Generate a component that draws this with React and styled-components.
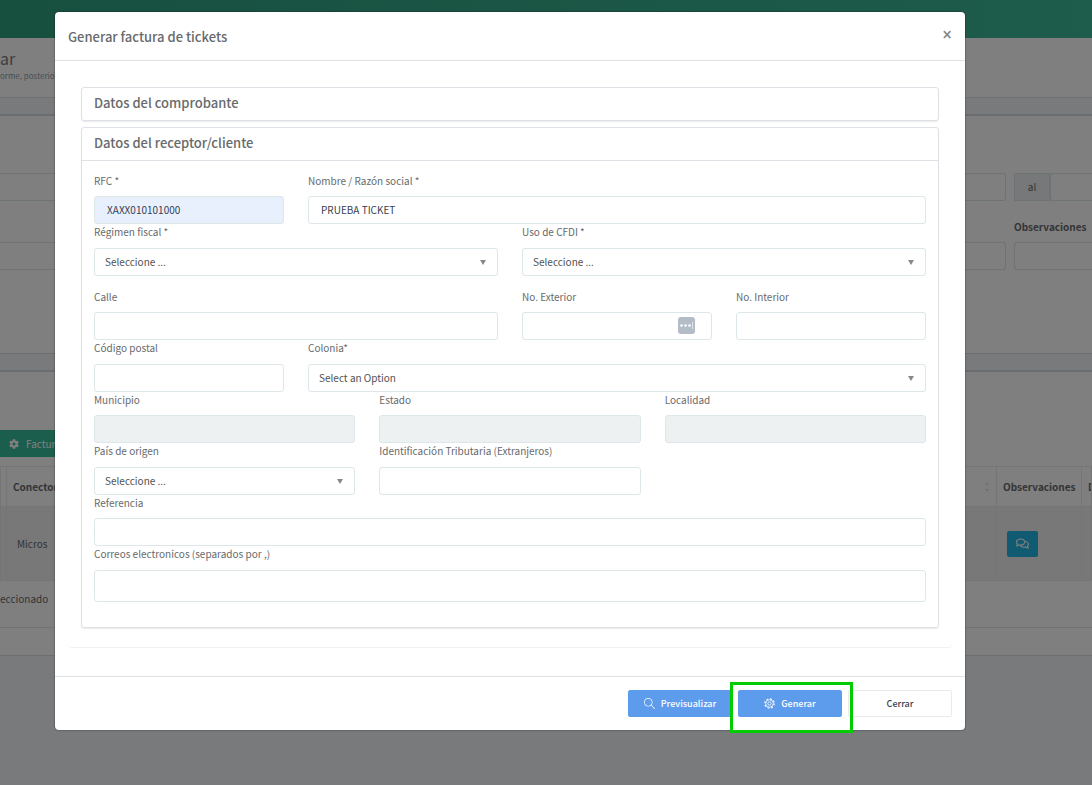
import React from "react";
import styled, { createGlobalStyle } from "styled-components";
import { SlMagnifier } from "react-icons/sl";
import { FaCog, FaRegComments } from "react-icons/fa";

const GlobalStyle = createGlobalStyle`
  * {
    box-sizing: border-box;
  }

  body {
    margin: 0;
    color: #676a6c;
    background: #f3f5f8;
    font-family: "Noto Sans CJK SC", "Noto Sans", sans-serif;
    font-size: 10px;
    line-height: 16px;
  }

  button, input, select {
    font-family: inherit;
    font-size: inherit;
    color: inherit;
  }
`;

const Page = styled.div`
  position: relative;
  min-height: 100vh;
  overflow: hidden;
`;

const TopBar = styled.header`
  height: 38px;
  background: linear-gradient(90deg, #30a080, #3cb896);
`;

const PageHead = styled.div`
  height: 60px;
  padding-top: 8px;
  background: #fff;
  border-bottom: 1px solid #dfe4e8;

  h1 {
    margin: 0;
    color: #7b7e80;
    font-size: 16px;
    font-weight: 400;
    line-height: 24px;
  }

  p {
    margin: 0;
    color: #909fa7;
    font-size: 8px;
    line-height: 12px;
  }
`;

const Panel = styled.section`
  margin-top: 16px;
  background: #fff;
  border-top: 2px solid #d5dde4;
  border-bottom: 1px solid #d9dee3;
`;

const Filters = styled.div`
  padding: 57px 0 70px;
`;

const FilterRow = styled.div`
  display: grid;
  grid-template-columns: 1fr 78px;
  align-items: end;
  gap: 8px;
  margin-bottom: 13px;

  label {
    display: block;
    padding: 5px 0 7px;
    font-weight: 700;
  }
`;

const FilterInput = styled.input`
  display: block;
  width: 100%;
  min-width: 0;
  height: 28px;
  background: #fff;
  border: 1px solid #dde6e9;
  border-radius: ${(props) => (props.$open ? "3px 0 0 3px" : "0 3px 3px 0")};
  border-width: ${(props) => (props.$open ? "1px 0 1px 1px" : "1px 1px 1px 0")};
`;

const RangeEnd = styled.div`
  display: flex;

  span {
    flex: 0 0 36px;
    text-align: center;
    line-height: 26px;
    background: #edf1f5;
    border: 1px solid #dde6e9;
  }
`;

const Toolbar = styled.div`
  padding: 58px 0 9px;
`;

const GreenButton = styled.button`
  display: flex;
  align-items: center;
  gap: 7px;
  width: 90px;
  height: 27px;
  padding: 0 9px;
  border: 0;
  color: #fff;
  background: #37bc9b;
`;

const Table = styled.table`
  width: 100%;
  table-layout: fixed;
  border-collapse: collapse;

  th,
  td {
    padding: 0 7px;
    text-align: left;
    white-space: nowrap;
    overflow: hidden;
    border: 1px solid #eaeaea;
  }

  th {
    height: 40px;
    padding: 0 6px;
    font-weight: 700;
  }

  td {
    height: 74px;
    padding: 0 10px;
    background: #f0f0f0;
  }

  th:first-child,
  td:first-child {
    padding: 0;
  }
`;

const HeadCell = styled.div`
  display: flex;
  justify-content: space-between;
  align-items: center;
`;

const TableInfo = styled.p`
  height: 47px;
  margin: 0;
  padding-top: 10px;
  border-bottom: 1px solid #e6e6e6;
`;

const PanelFoot = styled.div`
  height: 27px;
`;

const CommentButton = styled.button`
  display: flex;
  align-items: center;
  justify-content: center;
  width: 31px;
  height: 26px;
  padding: 0;
  border: 0;
  border-radius: 2px;
  color: #fff;
  background: #23b7e5;
`;

const Backdrop = styled.div`
  position: absolute;
  inset: 0;
  padding: 12px 127px 55px 55px;
  background: rgba(0, 0, 0, 0.5);
`;

const Modal = styled.div`
  background: #fff;
  border-radius: 4px;
  box-shadow: 0 0 2px rgba(0, 0, 0, 0.6);
`;

const ModalHeader = styled.div`
  display: flex;
  justify-content: space-between;
  align-items: center;
  height: 49px;
  padding: 0 13px;
  border-bottom: 1px solid #dee2e6;

  h2 {
    margin: 0;
    padding-top: 2px;
    font-size: 13px;
    font-weight: 500;
  }
`;

const CloseButton = styled.button`
  padding: 0 0 4px;
  border: 0;
  background: none;
  font-family: "Noto Sans", sans-serif;
  font-size: 17px;
  font-weight: 600;
  line-height: 17px;
  color: #888;
`;

const ModalBody = styled.div`
  padding: 13px 13px 28px;
`;

const TabPane = styled.div`
  padding: 13px 13px 19px;
  border-bottom: 1px solid #f1f1f1;
  border-radius: 4px;
`;

const Card = styled.section`
  border: 1px solid #dee2e6;
  border-radius: 3px;
  box-shadow: 0 1px 1px rgba(0, 0, 0, 0.08);

  & + & {
    margin-top: 6px;
  }

  h3 {
    margin: 0;
    padding: 0 12px 2px;
    font-size: 13px;
    font-weight: 500;
    line-height: 30px;
  }
`;

const CardBody = styled.div`
  padding: 12px 12px 25px;
  border-top: 1px solid #dee2e6;
`;

const Row = styled.div`
  display: grid;
  grid-template-columns: repeat(12, 1fr);
  column-gap: 24px;
  padding-top: ${(props) => (props.$spaced ? "13px" : "0")};

  label {
    margin-bottom: ${(props) => (props.$tight ? "7px" : "8px")};
  }
`;

const Field = styled.div`
  display: flex;
  flex-direction: column;
  grid-column: span ${(props) => props.$span};
  min-width: 0;
`;

const Control = styled.div`
  position: relative;
`;

const Input = styled.input`
  display: block;
  width: 100%;
  height: ${(props) => (props.$tall ? "32px" : "28px")};
  padding: 0 12px 2px;
  color: #3a3f51;
  background: ${(props) => (props.$filled ? "#e8f0fe" : "#fff")};
  border: 1px solid #dde6e9;
  border-radius: 3px;

  &:disabled {
    background: #edf1f2;
  }
`;

const SelectBox = styled(Control)`
  &::after {
    content: "";
    position: absolute;
    top: 12px;
    right: 12px;
    border: 3px solid transparent;
    border-top: 5px solid #888;
    border-bottom: 0;
    pointer-events: none;
  }

  select {
    display: block;
    width: 100%;
    height: 28px;
    padding: 0 24px 2px 10px;
    appearance: none;
    color: #515253;
    background: #fff;
    border: 1px solid #dde6e9;
    border-radius: 3px;
  }
`;

const AutofillBadge = styled.svg`
  position: absolute;
  top: 5px;
  right: 17px;
`;

const ModalFooter = styled.div`
  display: flex;
  justify-content: flex-end;
  gap: 6px;
  padding: 13px;
  border-top: 1px solid #dee2e6;
`;

const Button = styled.button`
  display: flex;
  align-items: center;
  justify-content: center;
  gap: 6px;
  width: 104px;
  height: 27px;
  padding: 0;
  font-size: 9px;
  font-weight: 500;
  color: ${(props) => (props.$primary ? "#fff" : "#3a3f51")};
  background: ${(props) => (props.$primary ? "#5d9cec" : "#fff")};
  border: 1px solid ${(props) => (props.$primary ? "#5d9cec" : "#eaeaea")};
  border-radius: 2px;
`;

const Highlight = styled.div`
  position: relative;

  &::after {
    content: "";
    position: absolute;
    inset: -8px -11px -16px -8px;
    border: 3px solid #00cc00;
    pointer-events: none;
  }
`;

function TextField({ id, label, span, ...rest }) {
  return (
    <Field $span={span}>
      <label htmlFor={id}>{label}</label>
      <Input id={id} type="text" {...rest} />
    </Field>
  );
}

function SelectField({ id, label, span, placeholder }) {
  return (
    <Field $span={span}>
      <label htmlFor={id}>{label}</label>
      <SelectBox>
        <select id={id}>
          <option>{placeholder}</option>
        </select>
      </SelectBox>
    </Field>
  );
}

function SortIcon() {
  return (
    <svg width="6" height="12" viewBox="0 0 6 12" fill="#e4e4e4">
      <path d="M3 1 5 4H1zM3 11 1 8h4z" />
    </svg>
  );
}

function GearIcon() {
  return (
    <svg width="11" height="11" viewBox="0 0 22 22" fill="none" stroke="#fff">
      <circle cx="11" cy="11" r="7.6" strokeWidth="1.6" />
      <circle cx="11" cy="11" r="9.4" strokeWidth="2.4" strokeDasharray="3.69 3.69" />
      <circle cx="11" cy="11" r="3.4" strokeWidth="1.6" />
    </svg>
  );
}

function Background() {
  return (
    <>
      <TopBar />
      <PageHead>
        <h1>ar</h1>
        <p>orme, posterio</p>
      </PageHead>
      <Panel>
        <Filters>
          <FilterRow>
            <FilterInput aria-label="Del" />
            <RangeEnd>
              <span>al</span>
              <FilterInput $open aria-label="al" />
            </RangeEnd>
          </FilterRow>
          <FilterRow>
            <FilterInput aria-label="Conector" />
            <div>
              <label htmlFor="observaciones">Observaciones</label>
              <FilterInput $open id="observaciones" />
            </div>
          </FilterRow>
        </Filters>
      </Panel>
      <Panel>
        <Toolbar>
          <GreenButton>
            <FaCog size={10} /> Factura
          </GreenButton>
        </Toolbar>
        <Table>
          <colgroup>
            <col width="6" />
            <col />
            <col width="85" />
            <col width="10" />
          </colgroup>
          <thead>
            <tr>
              <th />
              <th>
                <HeadCell>
                  Conector <SortIcon />
                </HeadCell>
              </th>
              <th>Observaciones</th>
              <th>D</th>
            </tr>
          </thead>
          <tbody>
            <tr>
              <td />
              <td>Micros</td>
              <td>
                <CommentButton aria-label="Observaciones">
                  <FaRegComments size={13} />
                </CommentButton>
              </td>
              <td />
            </tr>
          </tbody>
        </Table>
        <TableInfo>eccionado</TableInfo>
        <PanelFoot />
      </Panel>
    </>
  );
}

function App() {
  return (
    <Page>
      <GlobalStyle />
      <Background />
      <Backdrop>
        <Modal role="dialog" aria-labelledby="modal-title">
          <ModalHeader>
            <h2 id="modal-title">Generar factura de tickets</h2>
            <CloseButton aria-label="Cerrar">×</CloseButton>
          </ModalHeader>
          <ModalBody>
            <TabPane>
              <Card>
                <h3>Datos del comprobante</h3>
              </Card>
              <Card>
                <h3>Datos del receptor/cliente</h3>
                <CardBody>
                  <Row $tight>
                    <TextField id="rfc" label="RFC *" span={3} defaultValue="XAXX010101000" $filled />
                    <TextField id="nombre" label="Nombre / Razón social *" span={9} defaultValue="PRUEBA TICKET" />
                  </Row>
                  <Row>
                    <SelectField id="regimen" label="Régimen fiscal *" span={6} placeholder="Seleccione ..." />
                    <SelectField id="uso" label="Uso de CFDI *" span={6} placeholder="Seleccione ..." />
                  </Row>
                  <Row $spaced $tight>
                    <TextField id="calle" label="Calle" span={6} />
                    <Field $span={3}>
                      <label htmlFor="exterior">No. Exterior</label>
                      <Control>
                        <Input id="exterior" type="text" />
                        <AutofillBadge width="17" height="17" viewBox="0 0 17 17">
                          <rect width="17" height="17" rx="3" fill="#b4bcc8" />
                          <circle cx="3.5" cy="8.5" r="1.3" fill="#fff" />
                          <circle cx="7.5" cy="8.5" r="1.3" fill="#fff" />
                          <circle cx="11.5" cy="8.5" r="1.3" fill="#fff" />
                          <path d="M14.5 5v7" stroke="#dfe3e9" />
                        </AutofillBadge>
                      </Control>
                    </Field>
                    <TextField id="interior" label="No. Interior" span={3} />
                  </Row>
                  <Row>
                    <TextField id="cp" label="Código postal" span={3} />
                    <SelectField id="colonia" label="Colonia*" span={9} placeholder="Select an Option" />
                  </Row>
                  <Row $tight>
                    <TextField id="municipio" label="Municipio" span={4} disabled />
                    <TextField id="estado" label="Estado" span={4} disabled />
                    <TextField id="localidad" label="Localidad" span={4} disabled />
                  </Row>
                  <Row>
                    <SelectField id="pais" label="País de origen" span={4} placeholder="Seleccione ..." />
                    <TextField id="tributaria" label="Identificación Tributaria (Extranjeros)" span={4} />
                  </Row>
                  <Row $tight>
                    <TextField id="referencia" label="Referencia" span={12} />
                  </Row>
                  <Row>
                    <TextField id="correos" label="Correos electronicos (separados por ,)" span={12} $tall />
                  </Row>
                </CardBody>
              </Card>
            </TabPane>
          </ModalBody>
          <ModalFooter>
            <Button $primary>
              <SlMagnifier size={11} /> Previsualizar
            </Button>
            <Highlight>
              <Button $primary>
                <GearIcon /> Generar
              </Button>
            </Highlight>
            <Button>Cerrar</Button>
          </ModalFooter>
        </Modal>
      </Backdrop>
    </Page>
  );
}

export default App;
